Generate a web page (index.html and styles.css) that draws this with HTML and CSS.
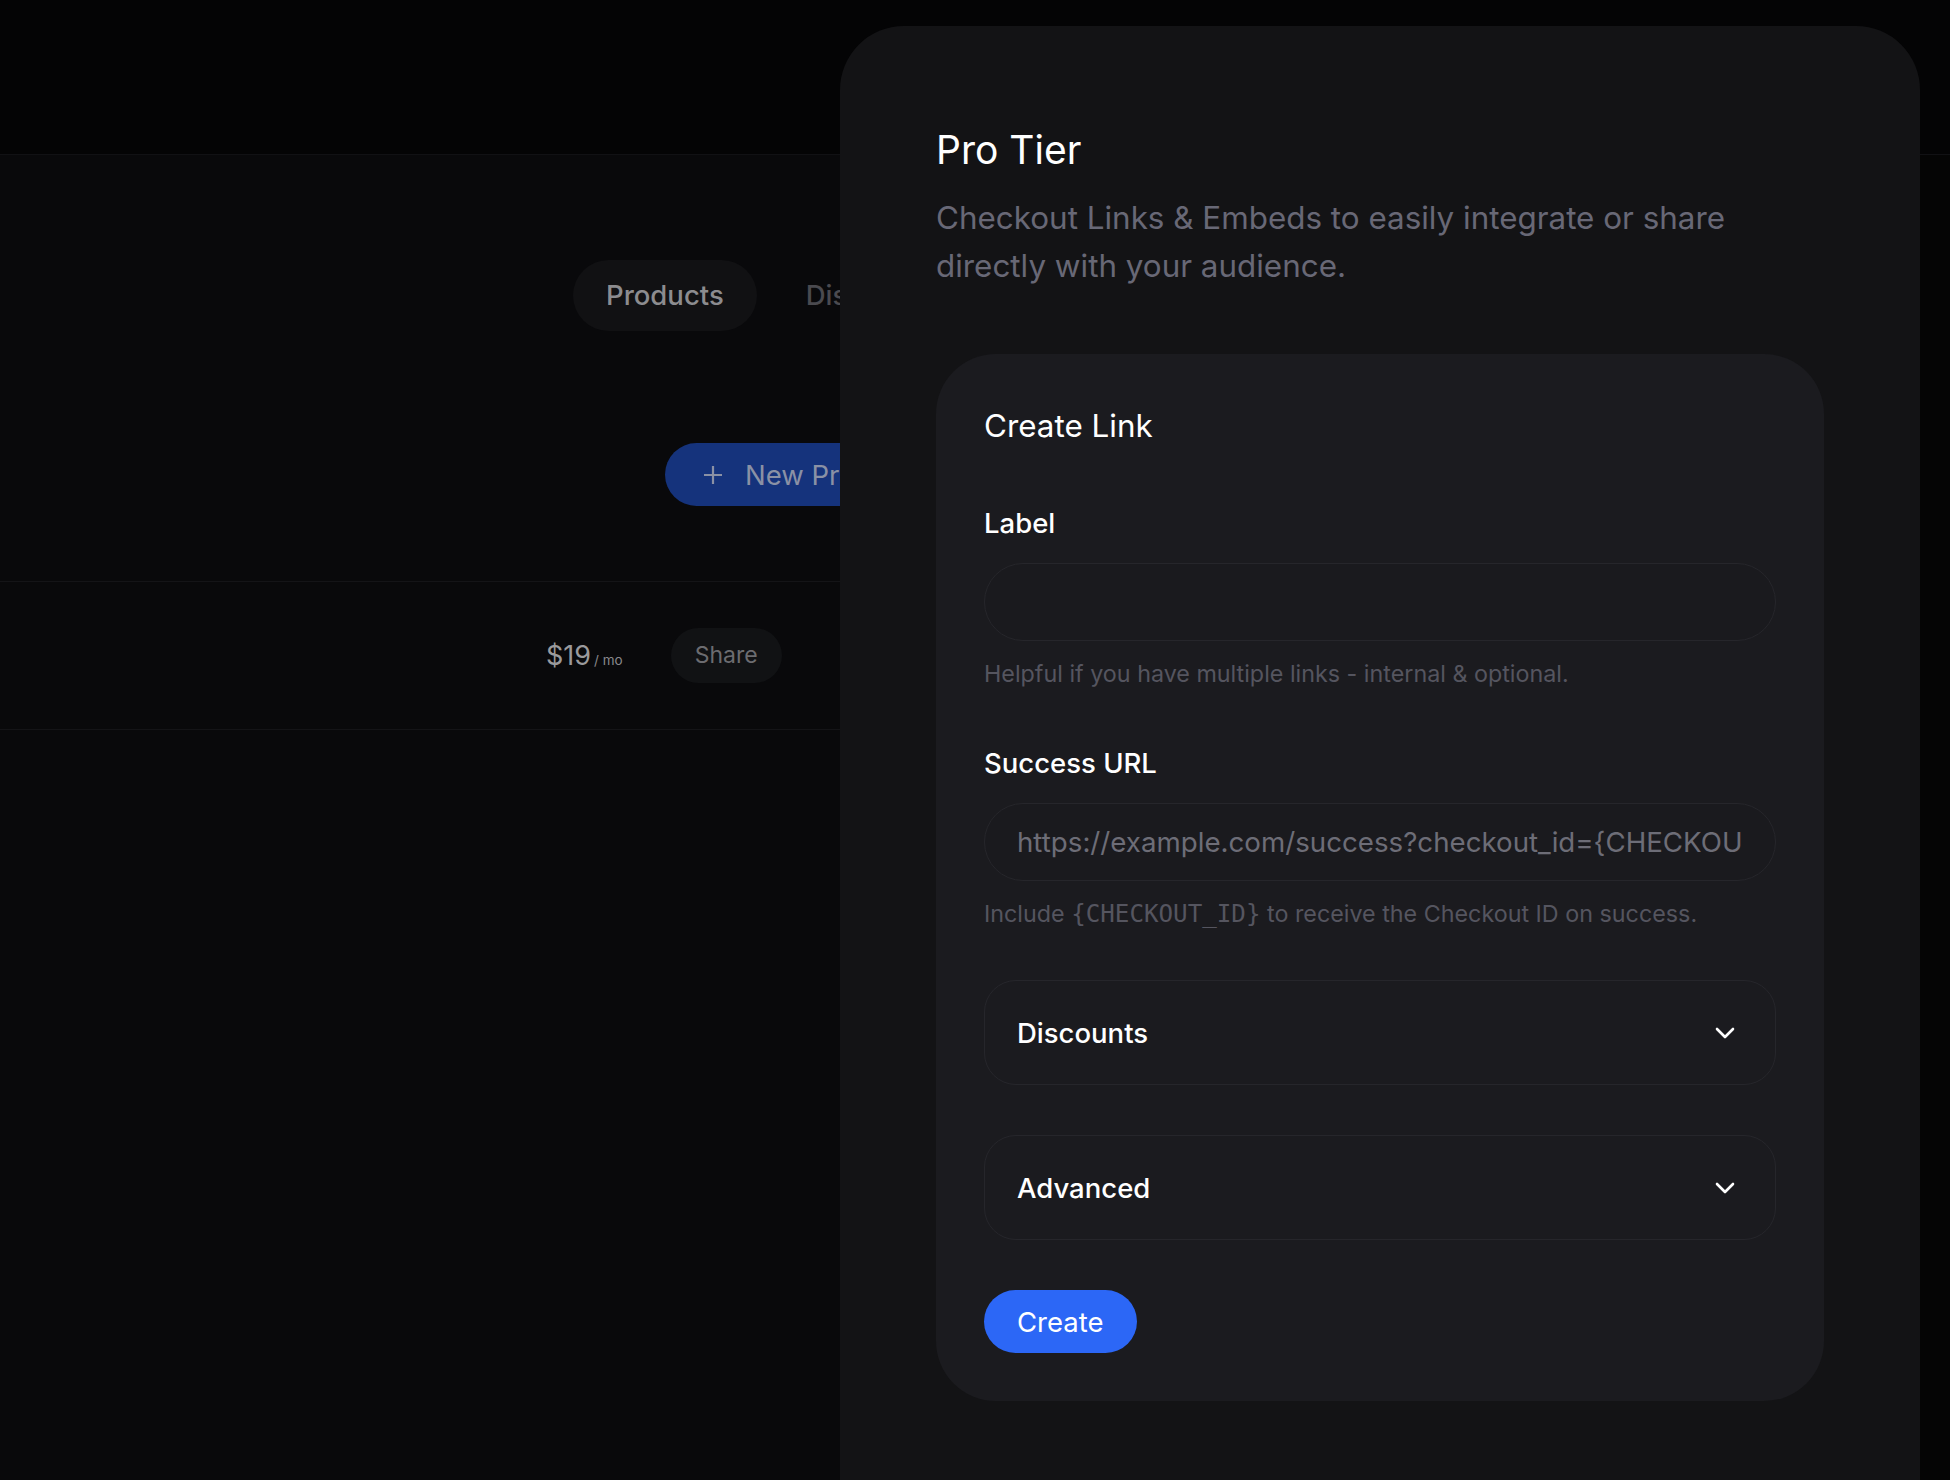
FILE: index.html
```html
<!DOCTYPE html>
<html lang="en">
<head>
<meta charset="utf-8">
<title>Pro Tier – Checkout Links</title>
<link rel="stylesheet" href="styles.css">
</head>
<body>
<div class="app">
  <header class="topbar"></header>
  <main class="main">
    <nav class="tabs">
      <span class="tab active">Products</span>
      <span class="tab">Discounts</span>
    </nav>
    <div class="toolbar">
      <button class="new-btn" type="button">
        <svg class="plus" width="20" height="20" viewBox="0 0 20 20" aria-hidden="true"><path d="M10 1v18M1 10h18" stroke="currentColor" stroke-width="2.2" fill="none"/></svg>
        <span>New Product</span>
      </button>
    </div>
    <div class="list">
      <div class="row">
        <span class="price">$19<span class="per">/ mo</span></span>
        <span class="share">Share</span>
      </div>
    </div>
  </main>

  <aside class="sheet">
    <h1 class="sheet-title">Pro Tier</h1>
    <p class="sheet-desc">Checkout Links &amp; Embeds to easily integrate or share directly with your audience.</p>

    <section class="card">
      <h2 class="card-title">Create Link</h2>
      <form class="form">
        <div class="field">
          <label class="field-label" for="label">Label</label>
          <input class="input" id="label" type="text">
          <p class="help">Helpful if you have multiple links - internal &amp; optional.</p>
        </div>
        <div class="field">
          <label class="field-label" for="url">Success URL</label>
          <input class="input" id="url" type="text" placeholder="https://example.com/success?checkout_id={CHECKOUT_ID}">
          <p class="help">Include <code>{CHECKOUT_ID}</code> to receive the Checkout ID on success.</p>
        </div>
        <div class="accordion">
          <span class="acc-title">Discounts</span>
          <svg class="chev" width="20" height="12" viewBox="0 0 20 12" aria-hidden="true"><path d="M2 2l8 8 8-8" stroke="currentColor" stroke-width="2.6" fill="none" stroke-linecap="round" stroke-linejoin="round"/></svg>
        </div>
        <div class="accordion">
          <span class="acc-title">Advanced</span>
          <svg class="chev" width="20" height="12" viewBox="0 0 20 12" aria-hidden="true"><path d="M2 2l8 8 8-8" stroke="currentColor" stroke-width="2.6" fill="none" stroke-linecap="round" stroke-linejoin="round"/></svg>
        </div>
        <button class="create" type="button">Create</button>
      </form>
    </section>
  </aside>
</div>
</body>
</html>
```

FILE: styles.css
```css
* {
  box-sizing: border-box;
  margin: 0;
  padding: 0;
}

html, body {
  width: 1950px;
  height: 1480px;
  overflow: hidden;
  background: #050505;
  font-family: Inter, "Noto Sans", sans-serif;
}

.app {
  position: relative;
  width: 1950px;
  height: 1480px;
}

.topbar {
  height: 155px;
  background: #040405;
  border-bottom: 1px solid #111114;
}

.main {
  width: 1880px;
  height: 1325px;
  background: #09090b;
}

.tabs {
  display: flex;
  gap: 16px;
  padding: 105px 0 0 573px;
}

.tab {
  height: 71px;
  padding: 0 33px;
  border-radius: 999px;
  font-size: 27.5px;
  font-weight: 500;
  line-height: 71px;
  color: #4a4a4f;
}

.tab.active {
  background: #111113;
  color: #8c8c8f;
}

.toolbar {
  padding: 112px 0 0 665px;
}

.new-btn {
  display: flex;
  align-items: center;
  gap: 22px;
  height: 63px;
  padding: 0 38px;
  border: none;
  border-radius: 999px;
  background: #15337c;
  color: #8a91a5;
  font-family: inherit;
  font-size: 27.5px;
}

.list {
  margin-top: 75px;
  border-top: 1px solid #141417;
  border-bottom: 1px solid #141417;
}

.row {
  display: flex;
  align-items: center;
  height: 147px;
  padding-left: 546px;
}

.price {
  font-size: 27px;
  color: #9a9a9c;
}

.per {
  margin-left: 3px;
  font-size: 13.5px;
  color: #88888b;
}

.share {
  margin-left: 48px;
  height: 55px;
  padding: 0 24px;
  border-radius: 999px;
  background: #111214;
  color: #6c6c70;
  font-size: 23px;
  line-height: 55px;
}

/* Sheet */
.sheet {
  position: absolute;
  left: 840px;
  top: 26px;
  width: 1080px;
  height: 1500px;
  padding: 101px 96px 0;
  background: #131315;
  border-radius: 64px 64px 0 0;
}

.sheet-title {
  font-size: 39px;
  line-height: 46px;
  font-weight: 400;
  color: #ffffff;
}

.sheet-desc {
  margin-top: 21px;
  font-size: 31.4px;
  line-height: 48px;
  color: #686876;
}

.card {
  margin-top: 64px;
  padding: 48px;
  background: #1b1b1f;
  border-radius: 60px;
}

.card-title {
  font-size: 31.4px;
  line-height: 48px;
  font-weight: 400;
  color: #ffffff;
}

.form {
  display: flex;
  flex-direction: column;
  gap: 50px;
  margin-top: 50px;
}

.field {
  display: flex;
  flex-direction: column;
}

.field-label {
  font-size: 27.5px;
  line-height: 47px;
  font-weight: 500;
  color: #ffffff;
}

.input {
  width: 100%;
  height: 78px;
  margin-top: 16px;
  padding: 0 32.5px 0 32px;
  border: 1.5px solid #26262b;
  border-radius: 999px;
  background: #1a1a1e;
  color: #ffffff;
  font-family: inherit;
  font-size: 27.7px;
  outline: none;
}

.input::placeholder {
  color: #6d6d77;
  opacity: 1;
}

.help {
  margin-top: 17px;
  font-size: 23.3px;
  line-height: 32px;
  color: #55555f;
}

.help code {
  font-family: "DejaVu Sans Mono", monospace;
  font-size: 24.2px;
}

.accordion {
  display: flex;
  align-items: center;
  justify-content: space-between;
  height: 105px;
  padding: 0 40px 0 32px;
  border: 1.5px solid #26262b;
  border-radius: 32px;
}

.acc-title {
  font-size: 27.5px;
  font-weight: 500;
  color: #ffffff;
}

.chev {
  color: #ffffff;
}

.create {
  align-self: flex-start;
  height: 63px;
  padding: 0 33px;
  border: none;
  border-radius: 999px;
  background: #2c67f6;
  color: #ffffff;
  font-family: inherit;
  font-size: 27.5px;
}
```
